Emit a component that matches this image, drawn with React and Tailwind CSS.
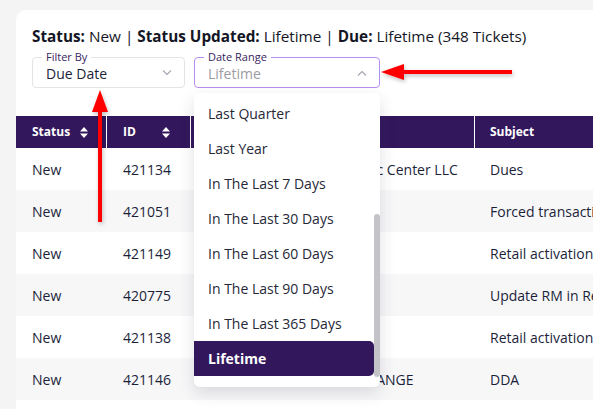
import React from "react";

const rows = [
  { status: "New", id: "421134", account: "Greenway Spa Chiropractic Center LLC", subject: "Dues" },
  { status: "New", id: "421051", account: "", subject: "Forced transaction" },
  { status: "New", id: "421149", account: "", subject: "Retail activation" },
  { status: "New", id: "420775", account: "", subject: "Update RM in Retail" },
  { status: "New", id: "421138", account: "", subject: "Retail activation" },
  { status: "New", id: "421146", account: "A1 FIRST CURRENCY EXCHANGE", subject: "DDA" },
];

const ranges = [
  "Last Quarter",
  "Last Year",
  "In The Last 7 Days",
  "In The Last 30 Days",
  "In The Last 60 Days",
  "In The Last 90 Days",
  "In The Last 365 Days",
  "Lifetime",
];

function SortIcon() {
  return (
    <svg width="8" height="11" viewBox="0 0 8 11" className="fill-white shrink-0">
      <path d="M4 0 L8 4.5 H0 Z" />
      <path d="M4 11 L8 6.5 H0 Z" />
    </svg>
  );
}

function Chevron({ up = false }) {
  return (
    <svg width="10" height="6" viewBox="0 0 10 6" fill="none" stroke="#a3a7b3" strokeWidth="1.2">
      <path d={up ? "M1 5.5 L5 1.5 L9 5.5" : "M1 0.5 L5 4.5 L9 0.5"} />
    </svg>
  );
}

function Field({ label, value, active, up, width }) {
  return (
    <div
      className={`relative h-[31px] ${width} shrink-0 rounded-[4px] border flex items-center pl-[13px] pr-[12px] ${
        active ? "border-[#b98ef2]" : "border-[#e3e4e8]"
      }`}
    >
      <span className="absolute left-[9px] top-[-8px] bg-white px-[4px] text-[11px] leading-[14px] text-[#3a2560]">
        {label}
      </span>
      <span className={`flex-1 text-[14px] pt-[1px] ${active ? "text-[#9b9ca3]" : "text-[#1c1f3a]"}`}>{value}</span>
      <Chevron up={up} />
    </div>
  );
}

function Arrows() {
  return (
    <svg className="absolute left-0 top-0 pointer-events-none" width="593" height="409">
      <defs>
        <filter id="arrowShadow" x="-20%" y="-20%" width="140%" height="140%">
          <feDropShadow dx="1" dy="2" stdDeviation="2" floodColor="#000" floodOpacity="0.25" />
        </filter>
      </defs>
      <g fill="#ff0000" filter="url(#arrowShadow)">
        <rect x="403" y="70" width="109" height="4" />
        <path d="M381 72 L404 64 L404 80 Z" />
        <rect x="98" y="110" width="4" height="112" />
        <path d="M100 90 L92 112 L108 112 Z" />
      </g>
    </svg>
  );
}

export default function App() {
  return (
    <div className="relative w-[593px] h-[409px] overflow-hidden bg-[#f4f4f5] pt-[10px] pl-[16px] font-['Open_Sans',sans-serif]">
      <div className="bg-white rounded-tl-[10px] h-full">
        <div className="pl-[16px] pt-[16px]">
          <div className="text-[15.3px] leading-[20px] text-[#141625] whitespace-nowrap">
            <b>Status:</b> New | <b>Status Updated:</b> Lifetime | <b>Due:</b> Lifetime (348 Tickets)
          </div>
          <div className="flex gap-[9px] mt-[11px]">
            <Field label="Filter By" value="Due Date" width="w-[153px]" />
            <Field label="Date Range" value="Lifetime" width="w-[186px]" active up />
          </div>
        </div>

        <div className="mt-[28px]">
          <div className="flex h-[32px] bg-[#33175c] text-white text-[12px] font-bold">
            <div className="w-[91px] shrink-0 flex items-center justify-between pl-[16px] pr-[18px] border-r border-white">
              Status <SortIcon />
            </div>
            <div className="w-[84px] shrink-0 flex items-center justify-between pl-[16px] pr-[20px] border-r border-white">
              ID <SortIcon />
            </div>
            <div className="w-[284px] shrink-0 border-r border-white" />
            <div className="flex-1 flex items-center pl-[15px]">Subject</div>
          </div>
          {rows.map((r, i) => (
            <div
              key={r.id}
              className={`flex h-[42px] items-center text-[14px] text-[#1c1f3a] whitespace-nowrap ${
                i % 2 ? "bg-[#f7f7f8]" : "bg-white"
              }`}
            >
              <div className="w-[91px] shrink-0 pl-[16px]">{r.status}</div>
              <div className="w-[84px] shrink-0 pl-[16px]">{r.id}</div>
              <div className="w-[284px] shrink-0 pl-[16px] overflow-hidden">{r.account}</div>
              <div className="flex-1 pl-[15px]">{r.subject}</div>
            </div>
          ))}
          <div className="h-[42px] bg-white" />
        </div>
      </div>

      {/* date range menu */}
      <div className="absolute left-[194px] top-[93px] w-[186px] h-[294px] bg-white rounded-[6px] shadow-[0_6px_16px_rgba(40,40,70,0.14)] flex">
        <div className="flex-1 pt-[3px]">
          {ranges.map((r) => (
            <div
              key={r}
              className={`h-[35px] flex items-center pl-[14px] text-[14px] ${
                r === "Lifetime"
                  ? "bg-[#33175c] text-white font-bold rounded-r-[5px]"
                  : "text-[#262838]"
              }`}
            >
              {r}
            </div>
          ))}
        </div>
        <div className="w-[6px] pt-[121px]">
          <div className="h-[163px] rounded-full bg-[#c4c4c8]" />
        </div>
      </div>

      <Arrows />
    </div>
  );
}
